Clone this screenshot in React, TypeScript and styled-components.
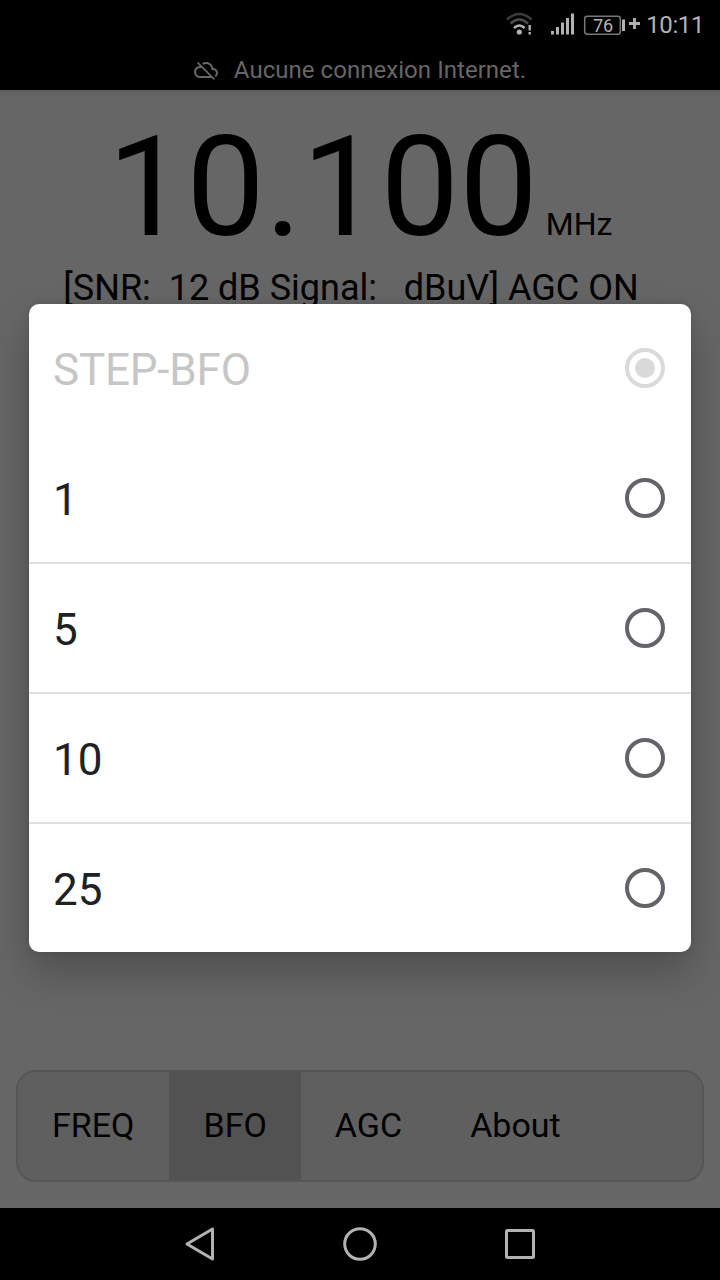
import React from "react";
import styled, { createGlobalStyle } from "styled-components";

const GlobalStyle = createGlobalStyle`
  * { box-sizing: border-box; }
  body { margin: 0; background: #000; font-family: Roboto, "Liberation Sans", sans-serif; }
`;

const Screen = styled.div`
  position: relative;
  display: flex;
  flex-direction: column;
  width: 720px;
  height: 1280px;
  overflow: hidden;
  background: #666;
  color: #000;
`;

const StatusBar = styled.header`
  display: flex;
  align-items: center;
  justify-content: flex-end;
  height: 50px;
  padding-right: 16px;
  background: #000;
  color: #b2b2b2;
`;

const StatusIcons = styled.svg`
  display: block;
  width: 138px;
  height: 30px;
  margin-right: 3px;
`;

const Clock = styled.span`
  font-size: 24px;
  line-height: 50px;
  letter-spacing: -0.4px;
`;

const OfflineBar = styled.div`
  display: flex;
  align-items: center;
  justify-content: center;
  gap: 16px;
  height: 40px;
  background: #000;
  color: #666;
  font-size: 24px;
  line-height: 40px;
  letter-spacing: 0.04px;
`;

const Main = styled.main`
  display: flex;
  flex: 1;
  flex-direction: column;
  align-items: center;
  padding-top: 27px;
  background: linear-gradient(#5c5c5c, #666 6px);
`;

const Frequency = styled.div`
  display: flex;
  align-items: baseline;
  gap: 8px;
  height: 140px;
  font-size: 140px;
  line-height: 140px;
`;

const Unit = styled.span`
  font-size: 32px;
  line-height: 40px;
`;

const Signal = styled.div`
  margin-top: 10px;
  padding-right: 18px;
  font-size: 36px;
  line-height: 42px;
  white-space: pre;
`;

const TabBar = styled.nav`
  display: flex;
  width: 688px;
  height: 112px;
  margin: auto 0 26px;
  overflow: hidden;
  background: #5f5f5f;
  border: 2px solid #565656;
  border-radius: 20px;
`;

const Tab = styled.button<{ $active?: boolean }>`
  padding: 0 34px 2px;
  border: 0;
  background: ${(p) => (p.$active ? "#525252" : "transparent")};
  color: #000;
  font: 34px/106px Roboto, "Liberation Sans", sans-serif;

  &:first-child {
    padding-right: 35px;
  }
`;

const NavBar = styled.footer`
  display: flex;
  align-items: center;
  justify-content: center;
  height: 72px;
  background: #000;
`;

const NavIcon = styled.svg`
  display: block;
  width: 160px;
  height: 72px;
  fill: none;
  stroke: #b2b2b2;
  stroke-width: 3;
  stroke-linejoin: round;
`;

const Dialog = styled.div`
  position: absolute;
  top: 304px;
  left: 29px;
  width: 662px;
  height: 648px;
  overflow: hidden;
  background: #fff;
  border-radius: 10px;
`;

const DialogShadow = styled.div`
  position: absolute;
  top: 304px;
  left: 29px;
  width: 662px;
  height: 648px;
  border-radius: 10px;
  box-shadow: 0 20px 44px rgba(0, 0, 0, 0.24), 0 0 6px rgba(0, 0, 0, 0.12);
`;

const Option = styled.div<{ $disabled?: boolean }>`
  display: flex;
  align-items: center;
  justify-content: space-between;
  height: 130px;
  padding: 0 26px 0 24px;
  border-bottom: 2px solid ${(p) => (p.$disabled ? "transparent" : "#e0e0e0")};
  color: ${(p) => (p.$disabled ? "#c6c6c6" : "#202124")};
  font-size: 44px;
  letter-spacing: ${(p) => (p.$disabled ? "-0.2px" : "0")};
`;

const OptionLabel = styled.span`
  padding-top: 4px;
  line-height: 52px;
`;

const Radio = styled.span<{ $checked?: boolean }>`
  display: flex;
  align-items: center;
  justify-content: center;
  width: 40px;
  height: 40px;
  border: 4px solid ${(p) => (p.$checked ? "#dadada" : "#636467")};
  border-radius: 50%;

  &::after {
    content: "";
    width: 20px;
    height: 20px;
    border-radius: 50%;
    background: ${(p) => (p.$checked ? "#dadada" : "transparent")};
  }
`;

const options = ["STEP-BFO", "1", "5", "10", "25"];
const tabs = ["FREQ", "BFO", "AGC", "About"];

export default function App() {
  return (
    <>
      <GlobalStyle />
      <Screen>
        <StatusBar>
          <StatusIcons viewBox="0 0 138 30" fill="none">
            <g strokeWidth="2.6">
              <path d="M2 9.500Q14.300-1.500 26.600 9.500" stroke="#3c3c3c" />
              <path d="M5.500 13.500Q14.300 5.500 23 13.500" stroke="#4c4c4c" />
              <path d="M9 18Q14.300 13 19.600 18" stroke="#b2b2b2" />
            </g>
            <circle cx="14.300" cy="22" r="2.600" fill="#b2b2b2" />
            <path d="M24.700 15v5.500M24.700 22v2.500" stroke="#b2b2b2" strokeWidth="2.400" />
            <path
              d="M47.500 21v3.500M52.500 17v7.500M57.500 12.500v12M62.500 8v16.500M67.500 3.500v21"
              stroke="#b2b2b2"
              strokeWidth="3"
            />
            <rect x="79.700" y="6.200" width="35.600" height="18" rx="2.500" stroke="#777" strokeWidth="1.500" />
            <text x="98" y="21.700" textAnchor="middle" fontSize="18" fill="#b2b2b2" fontFamily="Roboto">
              76
            </text>
            <path d="M118.500 9.500v11.500" stroke="#b2b2b2" strokeWidth="3" />
            <path d="M124 13.500h11M129.500 8v11" stroke="#b2b2b2" strokeWidth="2.800" />
          </StatusIcons>
          <Clock>10:11</Clock>
        </StatusBar>

        <OfflineBar>
          <svg width="24" height="24" viewBox="0 0 24 24" fill="#666">
            <path d="M19.350 10.040C18.670 6.590 15.640 4 12 4c-1.480 0-2.850.43-4.010 1.170l1.460 1.460C10.210 6.230 11.080 6 12 6c3.040 0 5.500 2.460 5.500 5.500v.5H19c1.660 0 3 1.340 3 3 0 1.130-.64 2.110-1.560 2.620l1.450 1.450C23.160 18.160 24 16.680 24 15c0-2.640-2.050-4.780-4.650-4.960zM3 5.270l2.750 2.740C2.560 8.150 0 10.770 0 14c0 3.310 2.690 6 6 6h11.730l2 2L21 20.730 4.270 4 3 5.270zM7.730 10l8 8H6c-2.210 0-4-1.790-4-4s1.790-4 4-4h1.730z" />
          </svg>
          <span>Aucune connexion Internet.</span>
        </OfflineBar>

        <Main>
          <Frequency>
            10.100<Unit>MHz</Unit>
          </Frequency>
          <Signal>{"[SNR:  12 dB Signal:   dBuV] AGC ON"}</Signal>
          <TabBar>
            {tabs.map((name) => (
              <Tab key={name} $active={name === "BFO"}>
                {name}
              </Tab>
            ))}
          </TabBar>
        </Main>

        <NavBar>
          <NavIcon viewBox="0 0 160 72">
            <path d="M67 36 92.500 21v30Z" />
          </NavIcon>
          <NavIcon viewBox="0 0 160 72">
            <circle cx="80" cy="36" r="15.300" />
          </NavIcon>
          <NavIcon viewBox="0 0 160 72">
            <rect x="66.500" y="22.500" width="27" height="27" rx="1" />
          </NavIcon>
        </NavBar>

        <DialogShadow />
        <Dialog>
          {options.map((name, i) => (
            <Option key={name} $disabled={i === 0}>
              <OptionLabel>{name}</OptionLabel>
              <Radio $checked={i === 0} />
            </Option>
          ))}
        </Dialog>
      </Screen>
    </>
  );
}
